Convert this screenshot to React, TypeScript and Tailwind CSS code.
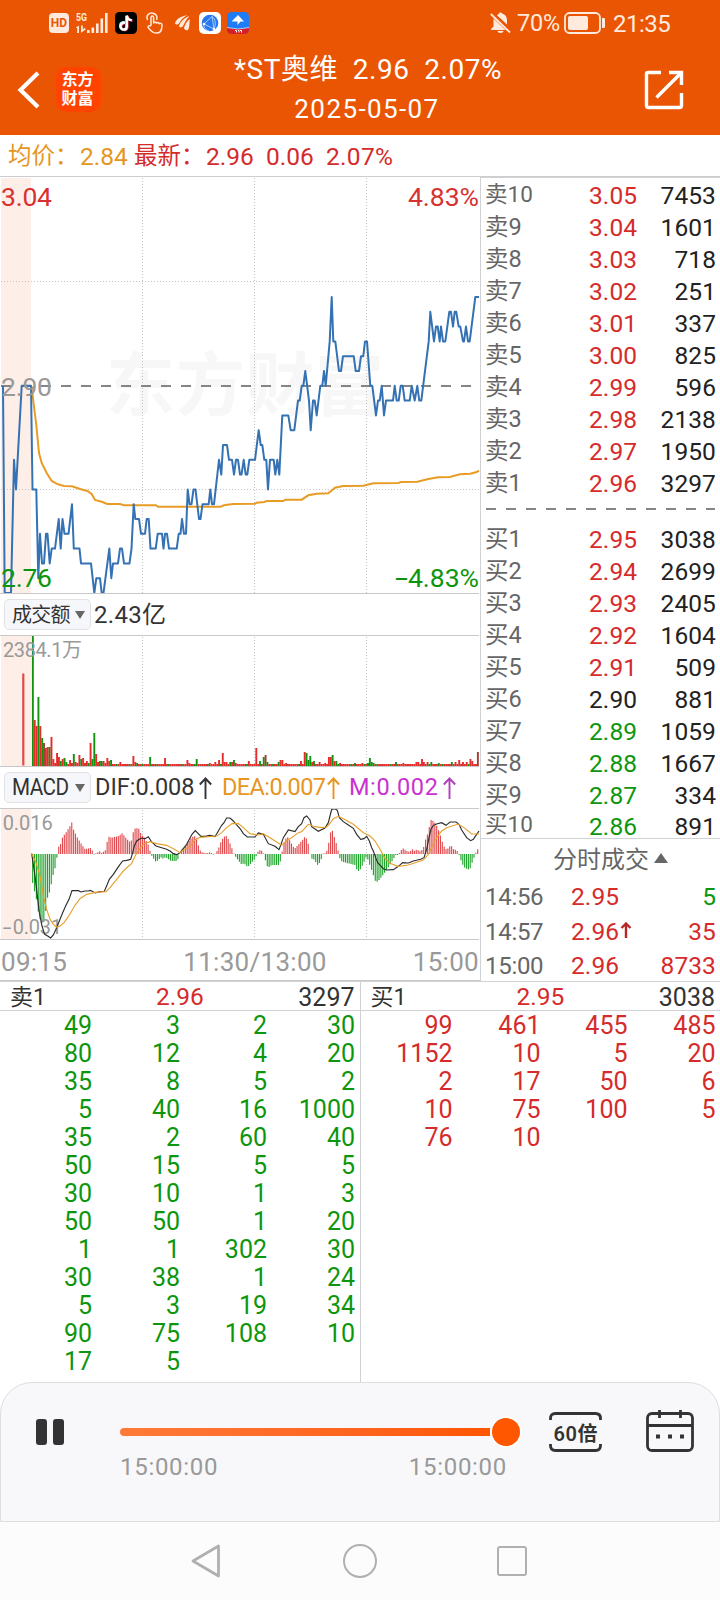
import type { ReactNode } from 'react';

const RED = 'text-[#d52b2b]';
const GREEN = 'text-[#0d960d]';
const DARK = 'text-[#222222]';

type Row = [label: string, price: string, volume: string];

const asks: Row[] = [
  ['卖10', '3.05', '7453'],
  ['卖9', '3.04', '1601'],
  ['卖8', '3.03', '718'],
  ['卖7', '3.02', '251'],
  ['卖6', '3.01', '337'],
  ['卖5', '3.00', '825'],
  ['卖4', '2.99', '596'],
  ['卖3', '2.98', '2138'],
  ['卖2', '2.97', '1950'],
  ['卖1', '2.96', '3297'],
];

const bids: Row[] = [
  ['买1', '2.95', '3038'],
  ['买2', '2.94', '2699'],
  ['买3', '2.93', '2405'],
  ['买4', '2.92', '1604'],
  ['买5', '2.91', '509'],
  ['买6', '2.90', '881'],
  ['买7', '2.89', '1059'],
  ['买8', '2.88', '1667'],
  ['买9', '2.87', '334'],
  ['买10', '2.86', '891'],
];

const askQueue = [
  49, 3, 2, 30, 80, 12, 4, 20, 35, 8, 5, 2, 5, 40, 16, 1000, 35, 2, 60, 40, 50, 15, 5, 5, 30, 10, 1, 3, 50, 50, 1, 20,
  1, 1, 302, 30, 30, 38, 1, 24, 5, 3, 19, 34, 90, 75, 108, 10, 17, 5,
];

const bidQueue = [99, 461, 455, 485, 1152, 10, 5, 20, 2, 17, 50, 6, 10, 75, 100, 5, 76, 10];

// x position, ticks away from the 2.90 previous close
const price: [number, number][] = [
  [3, 0], [4.7, -14], [11, -14], [14, -5], [16, -7], [21.7, 0], [31, 0], [32.5, -7], [36.3, -7], [38.3, -13],
  [40, -10], [42, -12], [44, -12], [46, -10], [47.5, -10], [49.7, -12], [51.7, -11], [55, -11], [58.7, -9], [60.7, -11],
  [62.5, -9], [64.5, -10], [68.5, -10], [72, -8], [73.8, -11], [79.5, -11], [81, -12], [91, -12], [94.3, -14], [96.3, -13],
  [100, -13], [101.7, -14], [103.5, -14], [109.3, -11], [111.3, -13], [113, -12], [118, -12], [120, -11], [122, -11],
  [124, -12], [129.5, -12], [131.5, -11], [133.7, -8], [135.3, -9], [139, -9], [141, -10], [145, -10], [146.7, -9],
  [148.7, -9], [150.5, -11], [155.7, -11], [157.7, -10], [162, -10], [163.5, -11], [165, -10], [167, -10], [169, -11],
  [176.7, -11], [178.7, -10], [180.5, -10], [182, -9], [184, -10], [186, -10], [187.7, -7], [189.5, -8], [191.5, -8],
  [193.5, -7], [195.5, -7], [199, -9], [200.5, -9], [202.5, -8], [208.7, -8], [210.3, -7], [212, -8], [214, -8],
  [219, -5], [221.3, -6], [223, -4], [227, -4], [229, -5], [232, -5], [234, -6], [236, -5], [238, -5], [240, -6],
  [241.5, -6], [243.7, -5], [245.7, -6], [247.3, -6], [249.3, -5], [255, -5], [258.7, -3], [260.7, -4], [262.3, -4],
  [264.3, -5], [266.3, -5], [268, -7], [270, -5], [273.7, -5], [275.3, -6], [277.3, -5], [279.3, -6], [282.3, -2],
  [288.3, -2], [290.7, -3], [294.3, -3], [298, -1], [299.7, -1], [301.7, 0], [303.3, 0], [305.3, 1], [309, -1],
  [310.7, -3], [313, -1], [314.7, -1], [316.7, -2], [320.3, 0], [322.3, 0], [324, 1], [325.7, 0], [329.7, 3],
  [331.7, 6], [333.3, 3], [335.3, 3], [339, 1], [341, 1], [343, 2], [353.7, 2], [355.7, 1], [359, 1], [361, 2],
  [363.3, 2], [365, 3], [367, 3], [370.3, 0], [372.3, 0], [376, -2], [378, -1], [379.7, -1], [381.7, 0], [384, -2],
  [386, -1], [393, -1], [394.7, 0], [396.7, -1], [398.7, -1], [400.7, 0], [402.7, 0], [404.7, -1], [409.7, -1],
  [411.7, 0], [414.7, -1], [417.3, 0], [419.3, -1], [421.3, -1], [428.7, 3], [430.3, 5], [434, 3], [436, 4],
  [437.7, 4], [439.7, 3], [441, 4], [443, 3], [445.3, 3], [449.3, 5], [451, 5], [453, 4], [454.7, 5], [456.3, 5],
  [458.7, 4], [460.3, 4], [463, 3], [464, 3], [466, 4], [468, 3], [469.7, 3], [475.3, 6], [479, 6],
];

const pricePoints = price.map(([x, t]) => `${x},${(209.8 - t * 14.8).toFixed(1)}`).join(' ');

const averagePoints =
  '31.7,212 36.3,249 39,277 41.7,287 46.7,297 51.7,305 58,308.3 64,310 72,310.3 80,313 87.3,315 91.7,318 95,324 101.7,325.7 107.3,328 120,328 124,329.3 156,329.3 158,330.7 220.7,330.7 224,329.3 233,328 255,327.7 256.7,326.7 264.3,326 266.7,325 283.3,325 285.3,323.7 301.7,323.7 308.3,319.3 316.7,317.7 328.3,317.3 335,311.7 343.3,310 363.3,309.7 373.3,307.3 398.3,307 401,306 417.3,305.7 428.3,303 438.3,301.3 450,301 460,298.3 470,297.7 476.7,296 479,294.7';

// minute index -> [bar height, up / down]
const turnover: Record<number, [number, 'r' | 'g' | 'd']> = {
  0: [130, 'g'], 1: [46, 'r'], 2: [40, 'r'], 3: [69, 'g'], 4: [40, 'r'], 5: [28, 'g'], 6: [23, 'd'], 7: [18, 'r'],
  8: [19, 'r'], 9: [19, 'g'], 10: [29, 'r'], 11: [7, 'r'], 12: [3, 'r'], 13: [13, 'r'], 14: [9, 'r'], 15: [5, 'g'],
  16: [7, 'r'], 17: [8, 'g'], 18: [4, 'g'], 19: [2, 'r'], 20: [6, 'r'], 21: [3, 'r'], 22: [12, 'g'], 23: [4, 'r'],
  24: [3, 'r'], 25: [11, 'r'], 26: [7, 'g'], 27: [8, 'r'], 28: [3, 'r'], 29: [5, 'r'], 30: [3, 'g'], 31: [23, 'r'],
  32: [7, 'g'], 33: [33, 'g'], 34: [12, 'r'], 35: [4, 'r'], 36: [5, 'g'], 37: [5, 'g'], 38: [5, 'r'], 39: [3, 'r'],
  40: [8, 'r'], 41: [5, 'r'], 42: [6, 'g'], 47: [4, 'r'], 54: [10, 'r'], 55: [4, 'r'], 56: [3, 'g'], 63: [9, 'g'],
  71: [8, 'r'], 83: [6, 'r'], 84: [3, 'r'], 88: [7, 'g'], 95: [3, 'r'], 98: [4, 'r'], 100: [6, 'r'], 102: [13, 'r'],
  103: [4, 'r'], 104: [4, 'r'], 106: [4, 'g'], 107: [4, 'r'], 108: [6, 'g'], 109: [3, 'r'], 116: [5, 'r'],
  120: [18, 'r'], 122: [5, 'g'], 124: [9, 'g'], 125: [11, 'd'], 126: [4, 'g'], 132: [4, 'g'], 133: [6, 'r'],
  134: [6, 'r'], 136: [3, 'r'], 144: [5, 'r'], 146: [14, 'r'], 147: [13, 'g'], 148: [6, 'g'], 149: [10, 'g'],
  150: [4, 'r'], 151: [5, 'g'], 154: [4, 'r'], 157: [3, 'r'], 159: [9, 'r'], 160: [9, 'r'], 161: [11, 'g'],
  162: [5, 'r'], 163: [5, 'g'], 165: [3, 'r'], 173: [3, 'g'], 177: [3, 'r'], 180: [3, 'g'], 181: [8, 'g'],
  182: [4, 'g'], 183: [3, 'g'], 195: [4, 'g'], 199: [3, 'r'], 206: [4, 'r'], 207: [4, 'r'], 209: [7, 'r'],
  210: [4, 'r'], 212: [4, 'r'], 214: [4, 'g'], 218: [3, 'g'], 225: [4, 'g'], 227: [4, 'r'], 229: [6, 'r'],
  231: [4, 'r'], 233: [4, 'r'], 235: [7, 'r'], 236: [5, 'r'], 239: [14, 'd'],
};

const barFill = { r: '#e62b2b', g: '#109410', d: '#a33c32' };

const bars = Array.from({ length: 240 }, (_, i) => {
  const [h, c] = turnover[i] ?? [2, i % 7 === 3 ? 'g' : 'r'];
  return { x: 31.9 + i * 1.862, h, fill: barFill[c] };
});

// MACD histogram envelope: x and height, sampled once per minute below
const envelope: [number, number][] = [
  [98, -29], [104, -38], [109, -45], [115, -58], [121, -66], [132, -68], [138, -55], [143, -43], [149, -38],
  [154, -30], [160, -20], [166, -13], [171, -3], [177, 9], [182, 10], [188, 17], [199, 22], [210, 28], [216, 32],
  [221, 24], [233, 16], [244, 10], [255, 5], [272, 6], [278, 3], [283, -1], [289, 1], [300, 3], [305, 1], [317, 4],
  [322, 13], [328, 18], [334, 16], [356, 18], [367, 21], [378, 16], [390, 12], [395, 14], [401, 24], [407, 26],
  [418, 25], [423, 20], [434, 16], [445, 9], [451, 2], [457, -3], [468, -8], [485, -3], [490, -5], [496, -3],
  [513, -7], [530, -7], [536, -4], [541, 3], [558, 8], [575, 17], [586, 18], [591, 14], [597, 6], [603, 2],
  [620, 0.5], [631, 2], [642, -1], [648, 1], [659, 8], [664, 14], [675, 18], [681, 18], [692, 9], [703, -1],
  [714, -6], [726, -11], [731, -9], [743, -13], [765, -5], [770, -1], [776, 4], [787, 3], [793, -1], [798, -9],
  [804, -14], [815, -11], [838, -11], [844, -4], [849, 9], [861, 18], [872, 12], [883, 5], [894, 9], [910, 15],
  [916, 18], [921, 14], [927, 8], [932, -4], [944, -6], [952, -11], [961, -8], [970, 1], [978, 0.5], [983, 6],
  [989, 16], [994, 26], [1000, 21], [1006, 13], [1011, 9], [1016, 0], [1022, -7], [1040, -9], [1065, -11],
  [1072, -17], [1078, -17], [1085, -13], [1100, -2], [1106, -8], [1118, -19], [1128, -29], [1140, -25],
  [1160, -16], [1180, -5], [1186, -1], [1195, -1], [1202, 3], [1208, 6], [1220, 3], [1230, 2], [1236, 5],
  [1244, 3], [1252, 5], [1258, 2], [1264, 4], [1269, 4], [1275, 13], [1286, 23], [1291, 34], [1297, 34],
  [1308, 30], [1319, 21], [1330, 9], [1336, 5], [1342, 5], [1353, 9], [1359, 5], [1370, 4], [1375, 1],
  [1387, -10], [1395, -14], [1409, -16], [1415, -10], [1426, 0], [1431, 4], [1440, 7],
];

const histogram = Array.from({ length: 240 }, (_, i) => {
  const x = 98 + i * 5.586;
  const k = Math.max(1, envelope.findIndex(([ex]) => ex >= x));
  const [x0, h0] = envelope[k - 1];
  const [x1, h1] = envelope[k];
  return { x, h: 3 * (h0 + ((h1 - h0) * (x - x0)) / (x1 - x0)) };
});

const difPoints =
  '95,137 105,204 118,314 126,354 134,379 143,384 152,390 160,381 168,364 178,339 188,314 198,292 207,274 216,248 235,248 243,252 255,249 265,249 272,247 285,255 300,251 313,250 322,229 328,214 340,199 350,184 358,172 368,159 380,157 392,154 398,134 403,114 410,99 418,94 425,90 435,92 445,86 455,102 468,114 485,119 500,124 510,129 520,137 530,140 540,134 548,124 560,109 568,94 576,79 586,68 597,79 603,85 615,85 630,82 645,86 655,69 665,52 672,44 680,30 690,30 700,39 710,51 722,64 730,77 742,87 765,87 775,75 790,79 805,107 825,115 837,125 843,109 850,89 865,66 885,71 895,56 905,47 912,29 920,24 930,36 935,56 955,70 975,60 985,44 990,24 995,4 1005,2 1012,7 1018,29 1030,41 1045,51 1060,61 1070,79 1082,94 1092,92 1100,85 1108,99 1115,119 1120,129 1127,149 1133,164 1150,182 1160,186 1180,185 1195,175 1208,164 1225,165 1240,159 1262,154 1272,149 1280,124 1287,89 1293,64 1300,52 1312,47 1325,44 1338,52 1350,42 1368,42 1377,49 1385,66 1400,89 1412,98 1420,94 1430,79 1437,69';

const deaPoints =
  '95,137 108,164 120,204 130,264 140,304 150,334 160,349 170,357 180,354 192,344 205,326 215,309 225,292 240,272 260,259 285,253 318,251 330,239 350,214 370,189 395,166 408,139 418,124 430,109 450,101 470,107 500,112 520,122 540,134 550,126 570,114 585,96 600,88 650,84 665,74 680,59 697,46 715,47 730,59 750,77 775,81 790,77 810,89 845,112 858,99 875,89 895,74 905,71 925,49 945,56 965,59 980,57 990,46 1000,32 1015,25 1030,32 1060,49 1090,74 1110,84 1125,99 1140,124 1155,151 1170,166 1195,175 1225,171 1270,156 1285,139 1300,109 1310,89 1325,69 1340,59 1375,48 1395,61 1415,78 1437,78';

// ---------------------------------------------------------------------------
// Header
// ---------------------------------------------------------------------------

function StatusBar() {
  return (
    <div className="flex h-[46px] items-center pl-[49px] text-[#ffeadd]">
      <div className="flex h-5 w-5 items-center justify-center rounded bg-[#ffeadd] text-[12px] leading-none font-bold text-[#ea5504]">
        HD
      </div>
      <svg className="ml-[6px] h-[22px] w-[34px]" viewBox="0 0 34 22" fill="currentColor">
        <text x="1" y="9" fontSize="11" fontWeight="700" textLength="11" lengthAdjust="spacingAndGlyphs">
          5G
        </text>
        <path d="M1 15.500l3-2V21H2.200v-5H1zM6 13.500h1.800v4l2.500-2v2.300l-4.300 3zM12 18h2.600v3H12zM16.500 15.500h2.600V21h-2.600zM21 11.500h2.600V21H21zM25.500 6.500h2.600V21h-2.600zM30 1h2.600v20H30z" />
      </svg>
      <svg className="ml-[6px] h-[22px] w-[22px]" viewBox="0 0 22 22" fill="none" strokeWidth="2.300">
        <rect width="22" height="22" rx="4.500" fill="#000" />
        <path d="M9.500 10c-6 .2-5.500 7.500-1.200 7.500 2.200 0 3-1.700 3-3.300V4" stroke="#4de8e4" />
        <path d="M10.700 11c-6 .2-5.500 7-1.200 7 2.200 0 3-1.700 3-3.300V4c.5 3 2.500 4.500 5 4.500" stroke="#f04664" />
        <path d="M10 10.500c-6 .2-5.500 7.200-1.200 7.200 2.200 0 3-1.700 3-3.300V3.500c.5 3.200 2.500 4.700 5 4.700" stroke="#fff" />
      </svg>
      <svg
        className="ml-[8px] h-[22px] w-[19px]"
        viewBox="0 0 19 22"
        fill="none"
        stroke="currentColor"
        strokeWidth="1.500"
        strokeLinejoin="round"
        strokeLinecap="round"
      >
        <path d="M6 13V5.500c0-2 2.600-2 2.600 0V11c.3-1.500 2.600-1.400 2.700.3.500-1.300 2.700-1.100 2.800.5.600-1 2.900-.6 2.900 1.200 0 4-.5 8-5 8-4.300 0-5.200-1.600-8.500-5-1.300-1.600.4-2.900 1.600-2z" />
        <path d="M2.500 7.500C.5 3.500 4.500.5 8 1.200c3 .6 4.500 3 3.700 6" />
      </svg>
      <svg className="ml-[10px] h-[18px] w-[17px]" viewBox="0 0 17 18" fill="currentColor">
        <path d="M1 9C3 4 8 2 14 1 9 3 7 6 5 9.500 3.800 11 1.500 11 1 9zM5 12c2-5 5-8 10.500-10C12 5 11 9 9 12c-1 1.800-3.500 2-4 0zM10 14c1-4 3-7 6-9-1 4 0 7-1.500 10-.8 2-3.800 1.500-4.500-1z" />
      </svg>
      <svg className="ml-[8px] h-[22px] w-[22px]" viewBox="0 0 22 22">
        <rect width="22" height="22" rx="5" fill="#fff" />
        <circle cx="11" cy="11" r="8.300" fill="#2578ed" />
        <path d="M5 12L13 4.500 15 17 5 12M13 4.500c4 3 4 8 2 12.500M5 12c-1 3 2 6 5 7" fill="none" stroke="#b9d6ff" strokeWidth="0.900" />
        <circle cx="5" cy="12" r="1.300" fill="#fff" />
        <circle cx="15" cy="17" r="1.300" fill="#fff" />
      </svg>
      <svg className="ml-[6px] h-[22px] w-[22px]" viewBox="0 0 22 22">
        <rect width="22" height="22" rx="4.500" fill="#1f7cf4" />
        <path d="M0 15.500q11 3 22 0v2a4.500 4.500 0 01-4.500 4.500h-13A4.500 4.500 0 010 17.500z" fill="#d91f26" />
        <path d="M0 15.500q11 3 22 0" fill="none" stroke="#cfe2ff" strokeWidth="0.800" />
        <path d="M4.500 9.500L11 3l6 6.500h-3.500L10.500 13V9.500z" fill="#fff" />
        <path d="M8 18.500h1.500v2M11 18.500h1v2M13 18.500h1.500v2" stroke="#fff" fill="none" />
      </svg>

      <svg className="ml-[241px] h-[22px] w-[21px]" viewBox="0 0 21 22" fill="currentColor">
        <path d="M3.500 6.500L15.500 18H1.500c-.8 0-.8-1 0-1.500l2-2zM7 3.200c1-.8 1.800-.8 2-1.600.4-1.400 2.600-1.400 3 0 3.500 1 5 3.500 5 7v4zM7.500 19h6c-.8 2.800-5.200 2.800-6 0z" />
        <path d="M.8 2L20 20.500" stroke="currentColor" strokeWidth="1.800" />
      </svg>
      <span className="mt-[1px] ml-[6px] w-[44px] text-[23.500px] leading-none tracking-[-0.2px]">70%</span>
      <svg className="ml-[3px] h-[22px] w-[42px]" viewBox="0 0 42 22">
        <rect x="1" y="1" width="35" height="20" rx="4.500" fill="none" stroke="currentColor" strokeWidth="1.800" />
        <rect x="4" y="4" width="20" height="14" rx="2" fill="currentColor" />
        <path d="M38 6c3 0 3 0 3 2v6c0 2 0 2-3 2z" fill="currentColor" />
      </svg>
      <span className="mt-[1px] ml-[7px] text-[24px] leading-none tracking-[-0.5px]">21:35</span>
    </div>
  );
}

function Header() {
  return (
    <header className="h-[135px] bg-[#ea5504] text-white">
      <StatusBar />
      <div className="flex h-[89px] items-start">
        <svg className="mt-[25px] ml-[17px] h-[38px] w-[23px]" viewBox="0 0 23 38" fill="none" stroke="#fff" strokeWidth="4.200">
          <path d="M21 2L3.500 19 21 36" />
        </svg>
        <div className="mt-[21px] ml-[16px] grid h-[45px] w-[45px] place-content-center rounded-[10px] bg-[#ff4400] pr-[2px] pb-[2px] text-center text-[16px] leading-[19px] font-bold">
          <div>东方</div>
          <div>财富</div>
        </div>
        <div className="ml-[84px] w-[364px] text-center">
          <div className="mt-[8px] h-[32px] pl-[2px] text-[28px] leading-[32px] whitespace-pre tracking-[0.5px]">*ST奥维  2.96  2.07%</div>
          <div className="mt-[8px] text-[26px] leading-[30px] tracking-[1.400px]">2025-05-07</div>
        </div>
        <svg className="mt-[24px] ml-[95px] h-[40px] w-[40px]" viewBox="0 0 40 40" fill="none" stroke="#fff" strokeWidth="3.400">
          <path d="M17 2.500H4Q2.500 2.500 2.500 4v31.500q0 2 2 2h31q2 0 2-2V23M25 2.500h12.500V15M37 3L12.500 27.500" />
        </svg>
      </div>
    </header>
  );
}

function Summary() {
  return (
    <div className="flex h-[42px] items-center border-b border-[#cdcdcf] pt-[3px] text-[24.500px] leading-none whitespace-nowrap">
      <span className="w-[72px] pl-[8px] text-[23.500px] text-[#e6961e]">均价：</span>
      <span className="w-[54px] pl-[8px] text-[#e6961e]">2.84</span>
      <span className={`w-[80px] pl-[8px] text-[23.500px] ${RED}`}>最新：</span>
      <span className={`w-[60px] ${RED}`}>2.96</span>
      <span className={`w-[60px] ${RED}`}>0.06</span>
      <span className={`tracking-[0.3px] ${RED}`}>2.07%</span>
    </div>
  );
}

// ---------------------------------------------------------------------------
// Charts
// ---------------------------------------------------------------------------

function Grid({ height }: { height: number }) {
  return (
    <g stroke="#c4c4c4" strokeDasharray="1 2">
      {[142.5, 254.5, 366.5].map((x) => (
        <line key={x} x1={x} x2={x} y1="2" y2={height} />
      ))}
    </g>
  );
}

function PriceChart() {
  return (
    <svg className="block h-[417px] w-[480px]" viewBox="0 1 480 417" fontSize="26.500">
      <text x="106" y="234" fontSize="69" fontWeight="700" fill="#f7f7f7" textLength="278">
        东方财富
      </text>
      <rect x="1" y="2" width="30" height="415" fill="#fdeee8" />
      <Grid height={417} />
      <path d="M1 105.500H479M1 313.500H479" stroke="#c4c4c4" strokeDasharray="1 2" />
      <path d="M1 210H474" stroke="#858585" strokeWidth="2" strokeDasharray="10 10" />
      <polyline points={averagePoints} fill="none" stroke="#e89c25" strokeWidth="2" />
      <polyline points={pricePoints} fill="none" stroke="#3572b3" strokeWidth="2" strokeLinejoin="round" />
      <text x="1" y="30" fill="#d83131" textLength="51">3.04</text>
      <text x="1" y="220" fill="#999" textLength="51">2.90</text>
      <text x="1" y="411" fill="#0d960d" textLength="51">2.76</text>
      <text x="408" y="30" fill="#d83131" textLength="71">4.83%</text>
      <text x="408" y="411" fill="#0d960d" textLength="71">4.83%</text>
      <text x="395" y="411" fill="#0d960d" textLength="13" lengthAdjust="spacingAndGlyphs">-</text>
      <line x1="0" x2="479" y1="417.500" y2="417.500" stroke="#c8c8c8" />
    </svg>
  );
}

function Picker({ children }: { children: ReactNode }) {
  return (
    <div className="ml-1 flex h-[31px] w-[87px] items-center justify-between rounded-[5px] border border-[#e2e2e6] bg-[#f6f7fa] pr-[5px] pl-[7px] text-[#333]">
      {children}
      <svg className="h-2 w-[10px] shrink-0" viewBox="0 0 10 8">
        <path d="M0 0h10L5 8z" fill="#666" />
      </svg>
    </div>
  );
}

function TurnoverChart() {
  return (
    <svg className="block h-[132px] w-[480px]" viewBox="0 0 480 132">
      <rect x="1" width="30" height="131" fill="#fdeee8" />
      <Grid height={131} />
      <rect x="22.200" y="38.500" width="2.200" height="92" fill="#de4c47" />
      {bars.map((b) => (
        <rect key={b.x} x={b.x} y={131 - b.h} width="1.900" height={b.h} fill={b.fill} />
      ))}
      <text x="3" y="22" fontSize="20" fill="#999" textLength="79">
        2384.1万
      </text>
      <path d="M0 .5H479M0 131.500H479" stroke="#c8c8c8" />
    </svg>
  );
}

function MacdChart() {
  return (
    <svg className="block h-[132px] w-[480px]" viewBox="0 0 1440 396">
      <rect x="3" width="90" height="393" fill="#fdeee8" />
      <g stroke="#c4c4c4" strokeWidth="3" strokeDasharray="3 6">
        <path d="M427.500 6V393M763.500 6V393M1099.500 6V393" />
      </g>
      {histogram.map(({ x, h }) => (
        <line
          key={x}
          x1={x}
          x2={x}
          y1="138"
          y2={138 - h}
          stroke={h > 0 ? '#e0494d' : '#1fa32b'}
          strokeWidth="3.400"
        />
      ))}
      <text x="8" y="67" fontSize="60" fill="#999" textLength="150">0.016</text>
      <text x="8" y="377" fontSize="60" fill="#999" textLength="26" lengthAdjust="spacingAndGlyphs">-</text>
      <text x="38" y="377" fontSize="60" fill="#999" textLength="148">0.031</text>
      <polyline points={difPoints} fill="none" stroke="#2c2c2c" strokeWidth="3.400" />
      <polyline points={deaPoints} fill="none" stroke="#e8a02d" strokeWidth="3.400" />
      <path d="M0 1.500H1437M0 394.500H1437" stroke="#c8c8c8" strokeWidth="3" />
    </svg>
  );
}

function UpArrow({ className }: { className: string }) {
  return (
    <svg className={className} viewBox="0 0 13 22" fill="none" stroke="currentColor" strokeWidth="1.900">
      <path d="M6.500 22V1.500M.8 7.500l5.700-6 5.700 6" />
    </svg>
  );
}

function Charts() {
  return (
    <div className="w-[480px]">
      <PriceChart />
      <div className="flex h-[41px] items-center text-[25px] leading-none text-[#333]">
        <Picker>
          <span className="text-[20px] tracking-[-0.8px]">成交额</span>
        </Picker>
        <span className="ml-[3px] text-[24px] tracking-[0.3px]">2.43亿</span>
      </div>
      <TurnoverChart />
      <div className="flex h-[41px] items-center text-[24px] leading-none text-[#333]">
        <Picker>
          <span className="w-[58px] origin-left scale-x-90 text-[23px] tracking-[-0.6px]">MACD</span>
        </Picker>
        <span className="ml-1 w-[98px] text-[23.500px]">DIF:0.008</span>
        <UpArrow className="ml-[6px] h-[22px] w-[13px]" />
        <span className="ml-[10px] w-[101px] text-[23.500px] tracking-[-0.6px] text-[#e6961e]">DEA:0.007</span>
        <UpArrow className="ml-[4px] h-[22px] w-[13px] text-[#e6961e]" />
        <span className="ml-[9px] w-[90px] text-[23.500px] tracking-[0.6px] text-[#c832cf]">M:0.002</span>
        <UpArrow className="ml-[4px] h-[22px] w-[13px] text-[#b040b8]" />
      </div>
      <MacdChart />
      <div className="flex h-[41px] items-center justify-between border-b border-[#c8c8c8] pt-[3px] pr-[1px] pl-[1px] text-[26px] leading-none tracking-[0.3px] text-[#999]">
        <span>09:15</span>
        <span className="pl-[30px]">11:30/13:00</span>
        <span>15:00</span>
      </div>
    </div>
  );
}

// ---------------------------------------------------------------------------
// Order book
// ---------------------------------------------------------------------------

function priceColor(value: string) {
  if (Number(value) > 2.9) return RED;
  return Number(value) < 2.9 ? GREEN : DARK;
}

function BookRow({ row: [label, value, volume], last }: { row: Row; last?: boolean }) {
  return (
    <div
      className={`flex pr-[4px] pl-[4px] text-[24.500px] tracking-[0.1px] ${last ? 'h-[27px] items-end leading-[22px]' : 'h-8 items-center pt-[2px] leading-none'}`}
    >
      <span className={`w-[104px] text-[#666] ${label.length > 2 ? 'mb-[3px] text-[22.500px]' : 'text-[23.500px]'}`}>{label}</span>
      <span className={`w-[60px] ${priceColor(value)}`}>{value}</span>
      <span className={`flex-1 text-right ${DARK}`}>{volume}</span>
    </div>
  );
}

function Trade({ time, value, volume, color, up }: { time: string; value: string; volume: string; color: string; up?: boolean }) {
  return (
    <div className="flex h-[34.500px] items-center pt-[2px] pr-[4px] pl-[4px] text-[24.500px] leading-none tracking-[0.1px]">
      <span className="w-[86px] text-[24px] tracking-[-0.3px] text-[#666]">{time}</span>
      <span className={RED}>{value}</span>
      {up && (
        <svg className="mb-1 ml-[1px] h-4 w-3 text-[#b9252a]" viewBox="0 0 12 16" fill="none" stroke="currentColor" strokeWidth="2.400">
          <path d="M6 16V1.500M1.500 6L6 1.500 10.500 6" />
        </svg>
      )}
      <span className={`flex-1 text-right ${color}`}>{volume}</span>
    </div>
  );
}

function OrderBook() {
  return (
    <div className="h-[804px] w-[240px] border-t border-l border-[#d0d2d6]">
      <div className="pt-[1px]">
        {asks.map((row) => (
          <BookRow key={row[0]} row={row} />
        ))}
      </div>
      <svg className="mx-[5px] block h-6 w-[229px]" viewBox="0 0 229 24">
        <path d="M0 10H229" stroke="#858585" strokeWidth="2" strokeDasharray="10 10" />
      </svg>
      <div className="h-[316px] border-b border-[#d0d2d6]">
        {bids.map((row, i) => (
          <BookRow key={row[0]} row={row} last={i === bids.length - 1} />
        ))}
      </div>
      <div className="flex h-[40px] items-center pt-[1px] pl-[72px] text-[24px] leading-none text-[#666]">
        分时成交
        <svg className="mb-1 ml-[5px] h-[10px] w-[14px]" viewBox="0 0 14 10">
          <path d="M0 10h14L7 0z" fill="#666" />
        </svg>
      </div>
      <Trade time="14:56" value="2.95" volume="5" color={GREEN} />
      <Trade time="14:57" value="2.96" volume="35" color={RED} up />
      <Trade time="15:00" value="2.96" volume="8733" color={RED} />
    </div>
  );
}

function Queue({ label, value, total, items, color }: { label: string; value: string; total: string; items: number[]; color: string }) {
  return (
    <div className="w-[360px] text-[25px] leading-none">
      <div className="flex h-[29px] items-center border-b border-[#d0d2d6] pt-[3px] pr-[5px] pl-[10px] text-[#333]">
        <span className="w-[146px] text-[23px]">{label}</span>
        <span className={`text-[24.500px] ${RED}`}>{value}</span>
        <span className="flex-1 text-right">{total}</span>
      </div>
      <div className="grid grid-cols-[92px_88px_87px_88px] pt-[1px]">
        {items.map((n, i) => (
          <span key={i} className={`h-7 text-right leading-[28px] ${color}`}>
            {n}
          </span>
        ))}
      </div>
    </div>
  );
}

// ---------------------------------------------------------------------------
// Replay controls
// ---------------------------------------------------------------------------

function Player() {
  return (
    <div className="flex h-[140px] items-start rounded-t-[32px] border border-[#dedee0] bg-[#f8f8fb]">
      <div className="mt-[36px] ml-[35px] flex gap-[6px]">
        <div className="h-[26px] w-[11px] rounded-[3px] bg-[#333]" />
        <div className="h-[26px] w-[11px] rounded-[3px] bg-[#333]" />
      </div>
      <div className="mt-[35px] ml-[56px] w-[400px]">
        <div className="flex h-7 items-center">
          <div className="h-2 w-[370px] rounded-l bg-linear-to-r from-[#ff7a38] to-[#ff5600]" />
          <div className="ml-[2px] h-7 w-7 rounded-full bg-[#ff5600] ring-2 ring-white" />
        </div>
        <div className="mt-[8px] flex w-[387px] justify-between text-[24px] leading-[26px] tracking-[0.7px] text-[#999]">
          <span>15:00:00</span>
          <span>15:00:00</span>
        </div>
      </div>
      <svg className="mt-[29px] ml-[29px] h-[40px] w-[53px]" viewBox="0 0 53 40" fill="none" stroke="#333" strokeWidth="2.800">
        <path d="M1.500 8V6.500Q1.500 1.500 6.500 1.500h40q5 0 5 5V8M1.500 32v1.500q0 5 5 5h40q5 0 5-5V32" />
        <text x="4.500" y="28.500" fontSize="20" fontWeight="600" fill="#333" stroke="none" textLength="44">
          60倍
        </text>
      </svg>
      <svg className="mt-[27px] ml-[44px] h-[43px] w-[48px]" viewBox="0 0 48 43" fill="none" stroke="#333" strokeWidth="2.800">
        <rect x="1.500" y="3.500" width="45" height="37" rx="4.500" />
        <path d="M2 15.500H46M13.500 0v8M34.500 0v8" />
        <path d="M10 26.500h4M22 26.500h4M34 26.500h4" strokeWidth="4" />
      </svg>
    </div>
  );
}

function NavBar() {
  return (
    <div className="flex h-[78px] items-center bg-[#fcfcfc] pl-[190px]">
      <svg className="h-9 w-8" viewBox="0 0 32 36" fill="none" stroke="#b0b0b0" strokeWidth="2.800" strokeLinejoin="round">
        <path d="M28.500 3v30L3 18z" />
      </svg>
      <div className="ml-[121px] h-[34px] w-[34px] rounded-full border-[2.5px] border-[#b0b0b0]" />
      <div className="ml-[120px] h-[30px] w-[30px] rounded-[3px] border-[2.5px] border-[#b0b0b0]" />
    </div>
  );
}

export default function App() {
  return (
    <div className="flex h-[1600px] w-[720px] flex-col overflow-hidden bg-white font-[Roboto,'Noto_Sans_CJK_SC',sans-serif]">
      <Header />
      <Summary />
      <div className="flex h-[804px]">
        <Charts />
        <OrderBook />
      </div>
      <div className="flex h-[401px] border-t border-[#d0d2d6]">
        <Queue label="卖1" value="2.96" total="3297" items={askQueue} color={GREEN} />
        <div className="w-px shrink-0 bg-[#d0d2d6]" />
        <Queue label="买1" value="2.95" total="3038" items={bidQueue} color={RED} />
      </div>
      <Player />
      <NavBar />
    </div>
  );
}
